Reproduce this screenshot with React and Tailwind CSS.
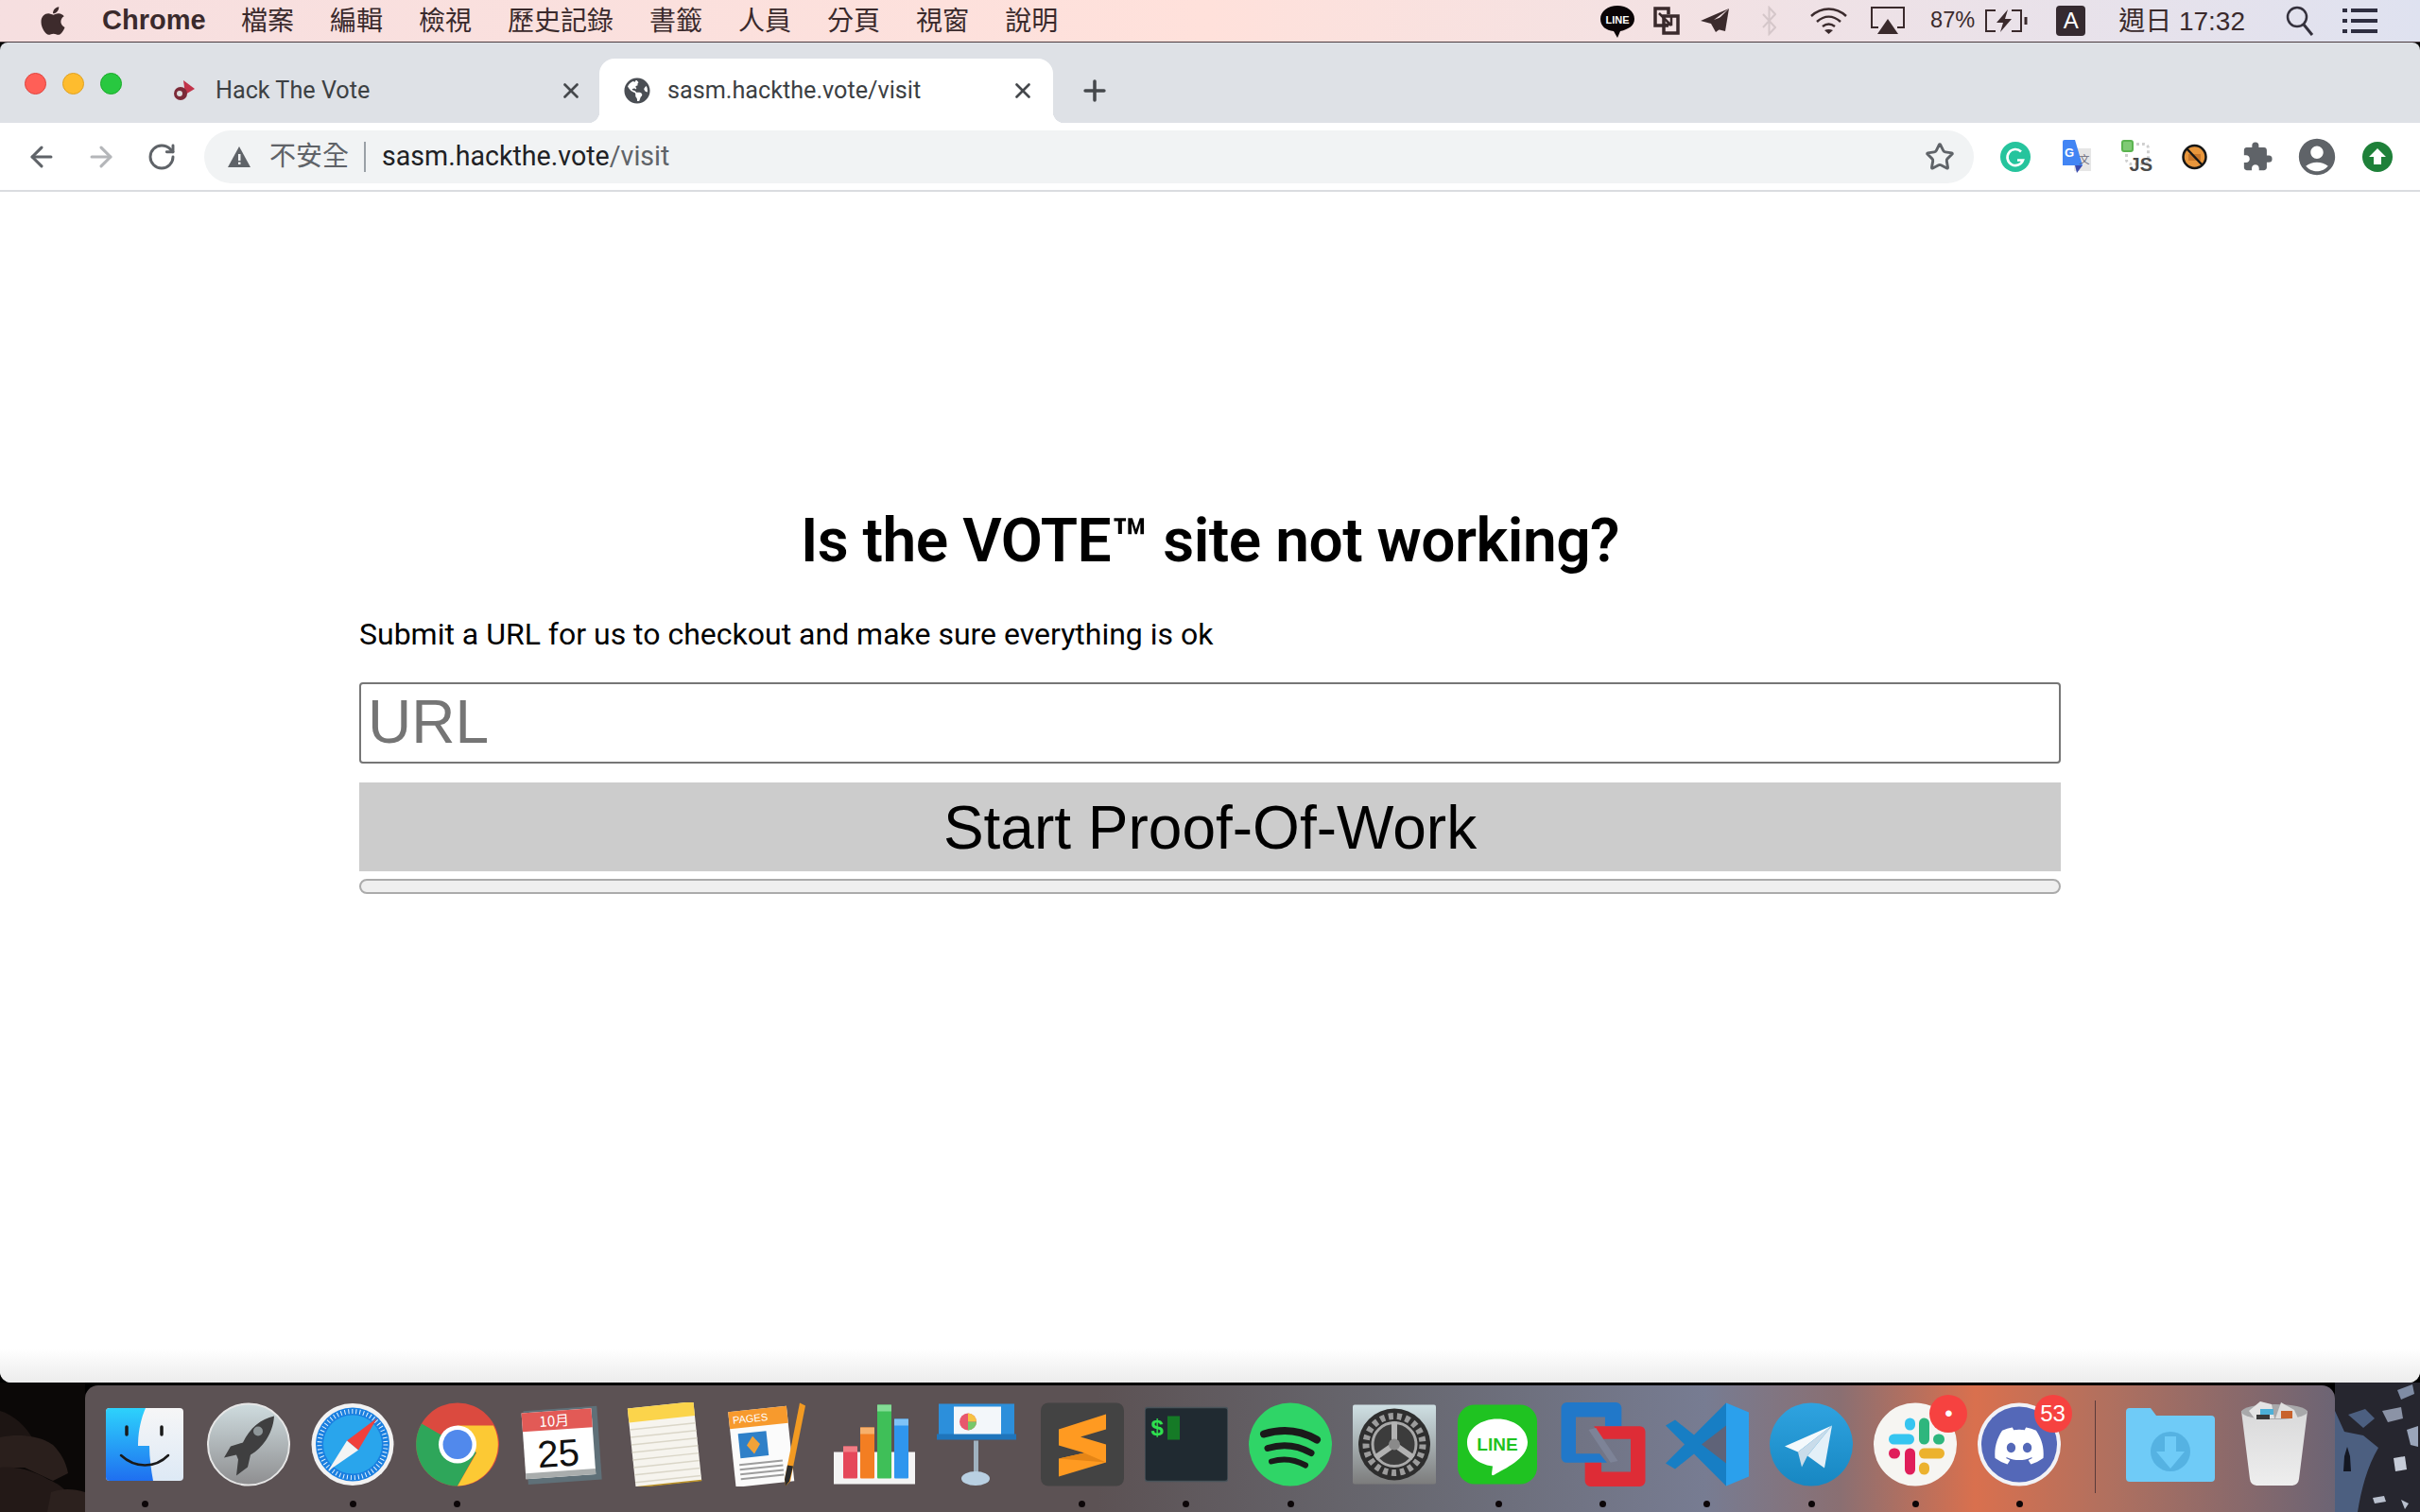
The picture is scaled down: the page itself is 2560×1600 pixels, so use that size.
import React from 'react';
import { ArrowLeft, ArrowRight, RotateCw, Star, X, Plus } from 'lucide-react';
import { FaApple, FaGlobeAmericas, FaDiscord } from 'react-icons/fa';
import { MdAccountCircle, MdExtension } from 'react-icons/md';

const menus = ['檔案', '編輯', '檢視', '歷史記錄', '書籤', '人員', '分頁', '視窗', '說明'];

function MenuBar() {
  return (
    <div className="h-[44px] flex items-center bg-gradient-to-r from-[#f6dfe0] via-[#ffe1db] to-[#dfe2f0] text-[#3a2a2c] border-b border-[#4b3c40] box-content font-['Liberation_Sans','Noto_Sans_CJK_TC',sans-serif]">
      <FaApple className="ml-[39px] text-[34px] text-[#3d2b2c]" />
      <span className="ml-[35px] w-[109px] text-[29px] font-bold">Chrome</span>
      <div className="ml-[38px] flex gap-[38px] text-[28px] leading-none pt-[2px]">
        {menus.map((m) => (
          <span key={m}>{m}</span>
        ))}
      </div>
      <div className="ml-auto flex items-center">
        <svg width="36" height="38" viewBox="0 0 36 38" className="mr-[20px]">
          <path d="M18 3C8 3 0 9 0 17c0 8 6 12 14 13l4 7 3-7c9-2 15-6 15-13C36 9 28 3 18 3z" fill="#0b0406" />
          <text x="18" y="22" fontSize="11" fontWeight="700" textAnchor="middle" fill="#fff" fontFamily="Liberation Sans">LINE</text>
        </svg>
        <svg width="28" height="30" viewBox="0 0 28 30" className="mr-[22px]" fill="none">
          <path d="M16 20H2V2h14v6" stroke="#3a2a2c" strokeWidth="3.5" />
          <rect x="11" y="10" width="15" height="18" stroke="#3a2a2c" strokeWidth="3.5" />
          <path d="M6 7l13 13M10 19h9v-8" stroke="#3a2a2c" strokeWidth="2.5" />
        </svg>
        <svg width="30" height="26" viewBox="0 0 30 26" className="mr-[35px]">
          <path d="M30 0L0 13l11 3 5 9 4-3-3-8 5-5-8 3z" fill="#3a2a2c" />
          <path d="M30 0l-4 24-8-2-3-7z" fill="#3a2a2c" />
        </svg>
        <svg width="15" height="32" viewBox="0 0 15 32" className="mr-[35px]" fill="none">
          <path d="M1 9l13 14-6.500 7V2L14 9 1 23" stroke="#d5c7ca" strokeWidth="2" />
        </svg>
        <svg width="41" height="30" viewBox="0 0 41 30" className="mr-[24px]" fill="none">
          <path d="M2 10c11-10 26-10 37 0M8 16c8-7 17-7 25 0M14 21c4-3 9-3 13 0" stroke="#3a2a2c" strokeWidth="2.500" />
          <path d="M20.500 29l-4.500-4c3-1.500 6-1.500 9 0z" fill="#3a2a2c" />
        </svg>
        <svg width="36" height="30" viewBox="0 0 36 30" className="mr-[27px]" fill="none">
          <path d="M8 22H1V1h34v21h-7" stroke="#3a2a2c" strokeWidth="2" />
          <path d="M18 13l11 16H7z" fill="#3a2a2c" />
        </svg>
        <span className="text-[23.5px] mr-[10px] leading-none">87%</span>
        <svg width="46" height="26" viewBox="0 0 46 26" className="mr-[30px]" fill="none">
          <path d="M12 2H2v22h10M29 2h10v22H29" stroke="#3a2a2c" strokeWidth="2" />
          <path d="M44 9v8" stroke="#3a2a2c" strokeWidth="3" />
          <path d="M25 1L13 15h7l-3 10 12-14h-7z" fill="#3a2a2c" />
        </svg>
        <div className="w-[31px] h-[32px] rounded-[4px] bg-[#352a30] text-white text-[24px] leading-[32px] text-center mr-[35px]">A</div>
        <span className="text-[28px] leading-none mr-[43px] whitespace-nowrap pt-[2px]">週日 17:32</span>
        <svg width="30" height="32" viewBox="0 0 30 32" className="mr-[30px]" fill="none">
          <circle cx="12" cy="12" r="10" stroke="#33303c" strokeWidth="2.500" />
          <path d="M19 20l9 11" stroke="#33303c" strokeWidth="3" />
        </svg>
        <svg width="37" height="28" viewBox="0 0 37 28" className="mr-[45px]" fill="#2e2e40">
          <rect x="0" y="1" width="5" height="4" />
          <rect x="9" y="1" width="28" height="4" />
          <rect x="0" y="12" width="5" height="4" />
          <rect x="9" y="12" width="28" height="4" />
          <rect x="0" y="23" width="5" height="4" />
          <rect x="9" y="23" width="28" height="4" />
        </svg>
      </div>
    </div>
  );
}

function TabStrip() {
  return (
    <div className="h-[85px] bg-[#dee1e6] rounded-t-[8px] flex items-end font-['Roboto',sans-serif] text-[25.2px] text-[#3c4043]">
      <div className="flex gap-[17px] h-full items-center pl-[26px] pt-[1px] w-[182px]">
        <span className="w-[23px] h-[23px] rounded-full bg-[#ff5f57] border border-[#e0443e]" />
        <span className="w-[23px] h-[23px] rounded-full bg-[#febc2e] border border-[#dea123]" />
        <span className="w-[23px] h-[23px] rounded-full bg-[#28c840] border border-[#1aab29]" />
      </div>
      <div className="w-[452px] h-[68px] flex items-center">
        <svg width="26" height="28" viewBox="0 0 26 28" className="mr-[20px]">
          <path d="M12 3l12 9-10 6z" fill="#c2334a" />
          <circle cx="9" cy="17" r="7" fill="#7c2a38" />
          <circle cx="8" cy="17" r="3" fill="#ddd" />
        </svg>
        <span>Hack The Vote</span>
        <X size={26} strokeWidth={2.5} className="ml-auto mr-[17px] text-[#45484c]" />
      </div>
      <div className="relative w-[480px] h-[68px] bg-white rounded-t-[16px] flex items-center pl-[26px]">
        <span className="absolute left-[-12px] bottom-0 w-[12px] h-[12px] bg-[radial-gradient(circle_at_0_0,transparent_12px,white_12.500px)]" />
        <span className="absolute right-[-12px] bottom-0 w-[12px] h-[12px] bg-[radial-gradient(circle_at_100%_0,transparent_12px,white_12.500px)]" />
        <FaGlobeAmericas className="text-[28px] text-[#4a4e54] mr-[18px]" />
        <span>sasm.hackthe.vote/visit</span>
        <X size={26} strokeWidth={2.5} className="ml-auto mr-[19px] text-[#45484c]" />
      </div>
      <div className="h-[68px] flex items-center ml-[27px]">
        <Plus size={34} strokeWidth={2.5} className="text-[#45484c]" />
      </div>
    </div>
  );
}

function ExtensionIcons() {
  return (
    <div className="flex items-center ml-[28px]">
      <svg width="32" height="32" viewBox="0 0 32 32" fill="none" className="mr-[32px]">
        <circle cx="16" cy="16" r="16" fill="#26c49d" />
        <path d="M22 10.500a8.500 8.500 0 1 0 2 9h-6" stroke="#fff" strokeWidth="2.6" />
      </svg>
      <svg width="32" height="36" viewBox="0 0 32 36" className="mr-[32px]">
        <rect x="14" y="9" width="18" height="24" fill="#e6e6e6" />
        <path d="M2 2a2 2 0 0 1 2-2h11l8 27H2z" fill="#4285f4" />
        <path d="M15 27h8l-6 8z" fill="#3a4bb0" />
        <text x="9" y="18" fontSize="13" fontWeight="700" fill="#fff" textAnchor="middle" fontFamily="Liberation Sans">G</text>
        <text x="25" y="25" fontSize="11" fill="#667" textAnchor="middle" fontFamily="Noto Sans CJK TC">文</text>
      </svg>
      <div className="relative w-[32px] h-[36px] mr-[32px]">
        <span className="absolute left-[4px] top-[3px] w-[26px] h-[24px] rounded-[6px] border-[3px] border-dotted border-[#cfcfcf]" />
        <span className="absolute left-0 top-0 w-[13px] h-[13px] rounded-[3px] bg-[#7fca74] border-2 border-[#5bb450]" />
        <span className="absolute right-[-1px] bottom-0 text-[20px] leading-none font-bold text-[#4a4a4a] font-['Liberation_Sans',sans-serif]">JS</span>
      </div>
      <svg width="27" height="28" viewBox="0 0 27 28" fill="none" className="mr-[36px]">
        <circle cx="13.500" cy="14" r="12" fill="#e8963c" stroke="#161616" strokeWidth="2.5" />
        <rect x="7" y="11" width="13" height="7" fill="#c9772a" />
        <path d="M5 5l17 18" stroke="#161616" strokeWidth="2.5" />
      </svg>
      <MdExtension className="text-[34px] text-[#5f6368] mr-[23px]" />
      <MdAccountCircle className="text-[46px] text-[#5f6368] mr-[25px]" />
      <svg width="32" height="32" viewBox="0 0 32 32">
        <circle cx="16" cy="16" r="16" fill="#1e8039" />
        <path d="M16 7l9 9h-5v8h-8v-8H7z" fill="#fff" />
      </svg>
    </div>
  );
}

function Toolbar() {
  return (
    <div className="h-[73px] bg-white border-b-2 border-[#dadce0] flex items-center">
      <ArrowLeft size={34} strokeWidth={2.2} className="ml-[27px] text-[#5f6368]" />
      <ArrowRight size={34} strokeWidth={2.2} className="ml-[29px] text-[#b4b6b9]" />
      <RotateCw size={32} strokeWidth={2.2} className="ml-[31px] text-[#5f6368]" />
      <div className="ml-[29px] w-[1872px] h-[56px] rounded-full bg-[#f1f3f4] flex items-center font-['Roboto','Noto_Sans_CJK_TC',sans-serif]">
        <svg width="24" height="22" viewBox="0 0 24 22" className="ml-[25px] mr-[20px]">
          <path d="M12 0l12 22H0z" fill="#5f6368" />
          <rect x="11" y="8" width="2.500" height="7" fill="#f1f3f4" />
          <rect x="11" y="16.500" width="2.500" height="2.500" fill="#f1f3f4" />
        </svg>
        <span className="text-[28px] text-[#5f6368] leading-none">不安全</span>
        <span className="w-[2px] h-[32px] bg-[#9aa0a6] ml-[16px] mr-[17px]" />
        <span className="text-[28.6px] text-[#202124]">sasm.hackthe.vote</span>
        <span className="text-[28.6px] text-[#5f6368]">/visit</span>
        <Star size={32} strokeWidth={2.2} className="ml-auto mr-[20px] text-[#5f6368]" />
      </div>
      <ExtensionIcons />
    </div>
  );
}

function PageContent() {
  return (
    <div className="flex-1 bg-white flex flex-col">
      <div className="w-[1800px] mx-auto pt-[332px] font-['Roboto',sans-serif] text-black">
        <h1 className="text-[64px] leading-[75px] font-semibold tracking-[-0.5px] text-center">Is the VOTE™ site not working?</h1>
        <p className="mt-[42px] text-[32px] leading-[38px]">Submit a URL for us to checkout and make sure everything is ok</p>
        <input
          readOnly
          placeholder="URL"
          className="mt-[32px] block w-full h-[86px] px-[7px] pb-[2px] border-2 border-[#767676] rounded-[4px] text-[64px] placeholder:text-[#757575] font-['Liberation_Sans',sans-serif] outline-none"
        />
        <button className="mt-[20px] block w-full h-[94px] pb-[2px] bg-[#cccccc] text-[64px] text-black font-['Liberation_Sans',sans-serif]">
          Start Proof-Of-Work
        </button>
        <div className="mt-[8px] h-[16px] rounded-[8px] border-2 border-[#ababab] bg-[#efefef]" />
      </div>
      <div className="mt-auto h-[36px] bg-[linear-gradient(180deg,#ffffff,#ececec)]" />
    </div>
  );
}

function Finder() {
  return (
    <svg viewBox="0 0 88 89" className="w-full h-full">
      <defs>
        <linearGradient id="fb" x1="0" y1="0" x2="0" y2="1"><stop offset="0" stopColor="#2dd2fc" /><stop offset="1" stopColor="#1f6ff0" /></linearGradient>
        <linearGradient id="fw" x1="0" y1="0" x2="0" y2="1"><stop offset="0" stopColor="#f6f6f7" /><stop offset="1" stopColor="#dde9f5" /></linearGradient>
      </defs>
      <g transform="translate(3 6)">
        <rect width="82" height="77" rx="4" fill="url(#fw)" />
        <path d="M4 0h38c-5 11-8 26-8 40h12c0 13 2 26 4 37H4a4 4 0 0 1-4-4V4a4 4 0 0 1 4-4z" fill="url(#fb)" />
        <path d="M22 20v8M59 20v8" stroke="#1a1a1a" strokeWidth="3.500" strokeLinecap="round" />
        <path d="M16 50c15 14 36 14 50 0" stroke="#1a1a1a" strokeWidth="2.500" fill="none" strokeLinecap="round" />
      </g>
    </svg>
  );
}

function Rocket() {
  return (
    <svg viewBox="0 0 88 88" className="w-full h-full">
      <defs>
        <linearGradient id="rk" x1="0" y1="0" x2="0" y2="1"><stop offset="0" stopColor="#cfdcdf" /><stop offset="1" stopColor="#8e8e90" /></linearGradient>
      </defs>
      <circle cx="44" cy="44" r="43" fill="url(#rk)" stroke="#e6e6e6" strokeWidth="2" />
      <path d="M71 14c-14 3-26 13-33 28l-13 4-7 12 13-3 2 5-2 17 12-9 3-13c14-8 24-24 25-41z" fill="#3f3f40" />
      <circle cx="54" cy="30" r="5" fill="#8e9698" />
    </svg>
  );
}

function Safari() {
  return (
    <svg viewBox="0 0 88 88" className="w-full h-full">
      <circle cx="44" cy="44" r="43.500" fill="#f2f2f2" />
      <circle cx="44" cy="44" r="39" fill="#1a7fe0" />
      <circle cx="44" cy="44" r="31" fill="#29a5ec" />
      <circle cx="44" cy="44" r="35" fill="none" stroke="#e8f4fd" strokeWidth="5" strokeDasharray="1 3" />
      <path d="M70 16L38 40l12 10z" fill="#f0403c" />
      <path d="M18 72l20-32 12 10z" fill="#f4f4f4" />
    </svg>
  );
}

function ChromeApp() {
  return (
    <svg viewBox="0 0 88 88" className="w-full h-full">
      <circle cx="44" cy="44" r="44" fill="#db4a3f" />
      <path d="M44 44L6 22A44 44 0 0 0 44 88l20-36z" fill="#2ea65a" />
      <path d="M44 24h38a44 44 0 0 1-38 64l20-35z" fill="#fcc934" />
      <circle cx="44" cy="44" r="20" fill="#fff" />
      <circle cx="44" cy="44" r="15.500" fill="#5189ec" />
    </svg>
  );
}

function CalendarApp() {
  return (
    <svg viewBox="0 0 88 88" className="w-full h-full">
      <g transform="rotate(-4 44 44)">
        <rect x="6" y="6" width="78" height="78" fill="#5f7078" />
        <rect x="4" y="8" width="74" height="70" fill="#fff" />
        <rect x="4" y="8" width="74" height="20" fill="#e25a56" />
        <text x="38" y="24" fontSize="15" fill="#fff" textAnchor="middle" fontFamily="Noto Sans CJK TC, sans-serif">10月</text>
        <text x="40" y="67" fontSize="40" fill="#111" textAnchor="middle" fontFamily="Liberation Sans, sans-serif">25</text>
        <rect x="4" y="72" width="74" height="6" fill="#a9adad" />
      </g>
    </svg>
  );
}

function Notes() {
  return (
    <svg viewBox="0 0 88 88" className="w-full h-full">
      <g transform="rotate(-6 44 44)">
        <rect x="8" y="2" width="70" height="84" fill="#f6f4ee" />
        <rect x="8" y="2" width="70" height="15" fill="#fbd44b" />
        {[24, 32, 40, 48, 56, 64, 72, 80].map((y) => (
          <rect key={y} x="8" y={y} width="70" height="1.500" fill="#dad6c8" />
        ))}
        <rect x="8" y="85" width="70" height="1.500" fill="#bb9226" />
      </g>
    </svg>
  );
}

function Pages() {
  return (
    <svg viewBox="0 0 88 88" className="w-full h-full">
      <g transform="rotate(-6 38 44)">
        <rect x="4" y="6" width="62" height="80" fill="#fbfbfb" />
        <rect x="4" y="6" width="62" height="18" fill="#f79a2d" />
        <text x="8" y="19" fontSize="11" fill="#fff" fontFamily="Liberation Sans, sans-serif">PAGES</text>
        <rect x="12" y="30" width="30" height="26" fill="#2f80c8" />
        <path d="M27 34l7 9-7 10-7-10z" fill="#f2a238" />
        {[62, 67, 72, 77].map((y) => (
          <rect key={y} x="10" y={y} width="46" height="2" fill="#9d9d9d" />
        ))}
      </g>
      <path d="M76 0l6 3-16 80-5 5-1-7z" fill="#f29a22" />
      <path d="M63 66l6 1-4 16-4 5-1-7z" fill="#2b2b2b" />
    </svg>
  );
}

function Numbers() {
  return (
    <svg viewBox="0 0 88 88" className="w-full h-full">
      <path d="M2 52h86v34H2z" fill="#f4f4f4" />
      <rect x="12" y="46" width="15" height="34" rx="1" fill="#e5485a" />
      <rect x="12" y="46" width="15" height="6" fill="#f27d85" />
      <rect x="30" y="26" width="15" height="54" rx="1" fill="#f37e22" />
      <rect x="30" y="26" width="15" height="7" fill="#f7b06b" />
      <rect x="48" y="2" width="15" height="78" rx="1" fill="#3fbf58" />
      <rect x="48" y="2" width="15" height="7" fill="#83dc95" />
      <rect x="66" y="17" width="15" height="63" rx="1" fill="#2f96ee" />
      <rect x="66" y="17" width="15" height="7" fill="#7fc3f7" />
    </svg>
  );
}

function Keynote() {
  return (
    <svg viewBox="0 0 88 88" className="w-full h-full">
      <rect x="2" y="1" width="80" height="36" fill="#2c8fdb" />
      <rect x="0" y="33" width="84" height="6" fill="#1f75bb" />
      <rect x="18" y="4" width="50" height="29" fill="#f3f7fa" />
      <circle cx="33" cy="20" r="9" fill="#e8586d" />
      <path d="M33 20V11a9 9 0 0 1 9 9z" fill="#f6c244" />
      <path d="M33 20h9a9 9 0 0 1-9 9z" fill="#76c86a" />
      <rect x="39" y="40" width="5" height="36" fill="#9fb1bf" />
      <ellipse cx="41" cy="80" rx="15" ry="7.500" fill="#b9d0e2" />
    </svg>
  );
}

function Sublime() {
  return (
    <svg viewBox="0 0 88 88" className="w-full h-full">
      <rect width="88" height="88" rx="8" fill="#434343" />
      <path d="M69 12L19 28v17l27 8-27 6v19l50-15V44L42 36l27-8z" fill="#ff9a21" />
      <path d="M19 59l27-6 23 10z" fill="#e58516" />
    </svg>
  );
}

function Terminal() {
  return (
    <svg viewBox="0 0 88 88" className="w-full h-full">
      <rect width="88" height="78" y="5" rx="3" fill="#202a31" stroke="#48535a" strokeWidth="1.500" />
      <text x="6" y="34" fontSize="24" fontWeight="700" fill="#2fe04f" fontFamily="Liberation Mono, monospace">$</text>
      <rect x="24" y="14" width="13" height="25" fill="#157a26" />
    </svg>
  );
}

function Spotify() {
  return (
    <svg viewBox="0 0 88 88" className="w-full h-full">
      <circle cx="44" cy="44" r="44" fill="#2fd567" />
      <path d="M16 33c19-6 39-4 56 6" stroke="#1a1a1a" strokeWidth="8" fill="none" strokeLinecap="round" />
      <path d="M20 48c16-5 32-3 46 5" stroke="#1a1a1a" strokeWidth="7" fill="none" strokeLinecap="round" />
      <path d="M24 62c13-4 25-2 36 4" stroke="#1a1a1a" strokeWidth="6" fill="none" strokeLinecap="round" />
    </svg>
  );
}

function SystemPrefs() {
  return (
    <svg viewBox="0 0 88 88" className="w-full h-full">
      <defs>
        <linearGradient id="sp" x1="0" y1="0" x2="0" y2="1"><stop offset="0" stopColor="#cfe0e4" /><stop offset="1" stopColor="#7c7c7c" /></linearGradient>
      </defs>
      <rect width="88" height="84" y="2" rx="2" fill="url(#sp)" />
      <circle cx="44" cy="44" r="38" fill="#2e2e2e" />
      <circle cx="44" cy="44" r="30" fill="none" stroke="#9c9c9c" strokeWidth="7" strokeDasharray="5 4" />
      <circle cx="44" cy="44" r="23" fill="#3c3c3c" stroke="#a9a9a9" strokeWidth="3" />
      <path d="M44 44V20M44 44L24 58M44 44l20 14" stroke="#b2b2b2" strokeWidth="6" />
      <circle cx="44" cy="44" r="6" fill="#8a8a8a" />
    </svg>
  );
}

function LineApp() {
  return (
    <svg viewBox="0 0 88 88" className="w-full h-full">
      <rect width="84" height="84" y="2" rx="18" fill="#1fc321" />
      <path d="M42 17c-18 0-32 11-32 25 0 13 11 23 27 25l-1 8c0 2 1 2 3 1 10-6 35-17 35-34 0-14-14-25-32-25z" fill="#fff" />
      <text x="42" y="50" fontSize="19" fontWeight="700" fill="#1fc321" textAnchor="middle" fontFamily="Liberation Sans, sans-serif">LINE</text>
    </svg>
  );
}

function Parallels() {
  return (
    <svg viewBox="0 0 92 92" className="w-full h-full">
      <path d="M6 0h54a6 6 0 0 1 6 6v20H48V16H16v40h26l8 10H6a6 6 0 0 1-6-6V6a6 6 0 0 1 6-6z" fill="#2178c9" />
      <path d="M36 26h50a6 6 0 0 1 6 6v54a6 6 0 0 1-6 6H32a6 6 0 0 1-6-6V66h18v10h32V40H42z" fill="#de2c36" />
      <path d="M30 30l8-2 24 36-8 2z" fill="#7d8397" />
    </svg>
  );
}

function VSCode() {
  return (
    <svg viewBox="0 0 88 88" className="w-full h-full">
      <path d="M64 0L30 34 10 18 0 24l20 20L0 64l10 6 20-16 34 34z" fill="#177ec4" />
      <path d="M64 0l24 10v68L64 88z" fill="#2ba0ec" />
      <path d="M64 24v40L38 44z" fill="#5f6378" />
    </svg>
  );
}

function Telegram() {
  return (
    <svg viewBox="0 0 88 88" className="w-full h-full">
      <defs>
        <linearGradient id="tg" x1="0" y1="0" x2="0" y2="1"><stop offset="0" stopColor="#2fa3e0" /><stop offset="1" stopColor="#1787c2" /></linearGradient>
      </defs>
      <circle cx="44" cy="44" r="44" fill="url(#tg)" />
      <path d="M66 24L16 46l14 6z" fill="#f4f9fc" />
      <path d="M66 24L30 52l4 16 6-12z" fill="#c9dcea" />
      <path d="M66 24L40 56l18 13z" fill="#e4f0f8" />
    </svg>
  );
}

function Slack() {
  return (
    <svg viewBox="0 0 88 88" className="w-full h-full">
      <circle cx="44" cy="44" r="44" fill="#f6f5f2" />
      <rect x="16" y="33" width="27" height="11" rx="5.500" fill="#36c5f0" />
      <rect x="33" y="16" width="11" height="13" rx="5.500" fill="#36c5f0" />
      <rect x="48" y="16" width="11" height="28" rx="5.500" fill="#2eb67d" />
      <rect x="63" y="33" width="12" height="11" rx="5.500" fill="#2eb67d" />
      <rect x="16" y="48" width="12" height="11" rx="5.500" fill="#e01e5a" />
      <rect x="33" y="48" width="11" height="28" rx="5.500" fill="#e01e5a" />
      <rect x="48" y="48" width="27" height="11" rx="5.500" fill="#ecb22e" />
      <rect x="48" y="63" width="11" height="13" rx="5.500" fill="#ecb22e" />
    </svg>
  );
}

function Trash() {
  return (
    <svg viewBox="0 0 74 92" className="w-[74px] h-[92px] mt-[15px]">
      <defs>
        <linearGradient id="tr" x1="0" y1="0" x2="0" y2="1"><stop offset="0" stopColor="#d9d9da" /><stop offset="1" stopColor="#eeeeee" /></linearGradient>
      </defs>
      <path d="M2 12l9 72a8 8 0 0 0 7 7h38a8 8 0 0 0 7-7l9-72z" fill="url(#tr)" />
      <ellipse cx="37" cy="13" rx="35" ry="8" fill="#a8a8aa" />
      <path d="M10 12l12-10 12 3 3 15H16z" fill="#e4e4e4" />
      <path d="M38 20l6-17 14 8 4 9z" fill="#dedede" />
      <path d="M22 10h14v6H22z" fill="#4cb0d8" />
      <path d="M44 12h12v8H44z" fill="#c8622c" />
      <path d="M18 16h14v5H18z" fill="#3a3a3a" />
    </svg>
  );
}

function DockIcon({ children, dot, badge, width = 'w-[88px]' }) {
  return (
    <div className="w-[110.2px] h-full flex flex-col items-center shrink-0 relative">
      <div className={`${width} h-[89px] mt-[18px] relative`}>{children}</div>
      {badge && (
        <span className="absolute right-0 top-[10px] w-[40px] h-[40px] rounded-full bg-[#f64240] text-white text-[24px] leading-[40px] text-center font-['Liberation_Sans',sans-serif]">
          {badge}
        </span>
      )}
      {dot && <span className="mt-[15px] w-[7px] h-[7px] rounded-full bg-[#0c0608]" />}
    </div>
  );
}

function Dock() {
  return (
    <div className="h-[137px] flex bg-black">
      <svg viewBox="0 0 90 137" className="w-[90px] h-[137px] shrink-0">
        <rect width="90" height="137" fill="#0b0807" />
        <path d="M0 30c14 4 28 16 36 32l-10 8H0z" fill="#1d1513" />
        <path d="M0 58c20-4 42-2 56 8 8 8 14 18 16 30l-16 8-30-14H0z" fill="#2a1f1c" />
        <path d="M0 90c18-2 36 4 50 12 14 6 26 14 32 35H0z" fill="#231917" />
        <path d="M54 116c10-4 24-4 36 0v21H50z" fill="#2c211e" />
      </svg>
      <div className="w-[2380px] h-full pt-[3px] shrink-0">
        <div className="h-full rounded-t-[14px] pl-[8px] flex bg-[linear-gradient(90deg,#5c5254_0%,#5c5254_45%,#67676f_58%,#777c92_72%,#8a6f72_78%,#d9704e_84%,#b0705f_90%,#6c6474_100%)]">
          <DockIcon dot><Finder /></DockIcon>
          <DockIcon><Rocket /></DockIcon>
          <DockIcon dot><Safari /></DockIcon>
          <DockIcon dot><ChromeApp /></DockIcon>
          <DockIcon><CalendarApp /></DockIcon>
          <DockIcon><Notes /></DockIcon>
          <DockIcon><Pages /></DockIcon>
          <DockIcon><Numbers /></DockIcon>
          <DockIcon><Keynote /></DockIcon>
          <DockIcon dot><Sublime /></DockIcon>
          <DockIcon dot><Terminal /></DockIcon>
          <DockIcon dot><Spotify /></DockIcon>
          <DockIcon><SystemPrefs /></DockIcon>
          <DockIcon dot><LineApp /></DockIcon>
          <DockIcon dot width="w-[92px]"><Parallels /></DockIcon>
          <DockIcon dot><VSCode /></DockIcon>
          <DockIcon dot><Telegram /></DockIcon>
          <DockIcon dot badge="•"><Slack /></DockIcon>
          <DockIcon dot badge="53">
            <svg viewBox="0 0 88 88" className="w-full h-full">
              <circle cx="44" cy="44" r="44" fill="#f2f2f6" />
              <circle cx="44" cy="44" r="40" fill="#5468b8" />
            </svg>
            <FaDiscord className="absolute left-[16px] top-[18px] text-[56px] text-white" />
          </DockIcon>
          <span className="w-[1px] h-[98px] bg-[#5a3a3a] mt-[16px] ml-[24px] mr-[24px] shrink-0" />
          <div className="w-[110px] h-full shrink-0 flex justify-center">
            <svg viewBox="0 0 94 78" className="w-[94px] h-[78px] mt-[24px]">
              <path d="M0 4a4 4 0 0 1 4-4h22l6 8h58a4 4 0 0 1 4 4v62a4 4 0 0 1-4 4H4a4 4 0 0 1-4-4z" fill="#6fcbf7" />
              <circle cx="47" cy="46" r="21" fill="#55b2e2" />
              <path d="M41 30h12v16h9L47 64 32 46h9z" fill="#6fcbf7" />
            </svg>
          </div>
          <div className="w-[110px] h-full shrink-0 flex justify-center">
            <Trash />
          </div>
        </div>
      </div>
      <svg viewBox="0 0 90 137" className="w-[90px] h-[137px] shrink-0">
        <rect width="90" height="137" fill="#4c5f80" />
        <path d="M0 0h90v137H24c4-24 10-48 22-68L30 56 10 52 0 30z" fill="#26262f" />
        <path d="M14 34l18-6 10 10-12 10z" fill="#4c5f80" />
        <path d="M50 30l20-4 2 12-16 4z" fill="#8b93a6" />
        <path d="M62 80l12-2 2 14-12 2z" fill="#c6ccd8" />
        <path d="M66 8l16-6 2 10-14 6z" fill="#7f8ca4" />
        <path d="M76 50l12-4v22l-8-2z" fill="#9aa5ba" />
        <path d="M40 122l12-2 2 6-12 2zM70 124l8 4-4 6z" fill="#b9c0ce" />
        <path d="M10 78l3-10 3 10 1 16H9z" fill="#141722" />
      </svg>
    </div>
  );
}

export default function App() {
  return (
    <div className="w-[2560px] h-[1600px] overflow-hidden flex flex-col bg-black">
      <MenuBar />
      <div className="flex-1 flex flex-col rounded-b-[12px] overflow-hidden">
        <TabStrip />
        <Toolbar />
        <PageContent />
      </div>
      <Dock />
    </div>
  );
}
